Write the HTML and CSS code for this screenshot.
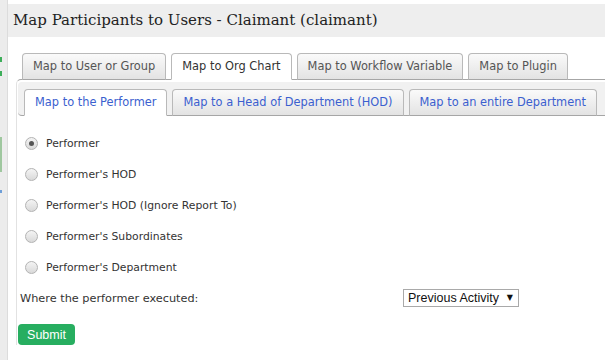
FILE: index.html
```html
<!DOCTYPE html>
<html lang="en">
<head>
  <meta charset="UTF-8">
  <meta name="viewport" content="width=device-width, initial-scale=1.0">
  <title>Map Participants to Users</title>
  <link rel="stylesheet" href="styles.css">
</head>
<body>
  <div class="page">
    <!-- pedaço da janela de trás -->
    <div class="edge">
      <span class="mark mark-1"></span>
      <span class="mark mark-2"></span>
      <span class="mark mark-3"></span>
      <span class="mark mark-4"></span>
    </div>

    <div class="dialog">
      <h1 class="title">Map Participants to Users - Claimant (claimant)</h1>

      <ul class="tabs">
        <li class="tab">Map to User or Group</li>
        <li class="tab active">Map to Org Chart</li>
        <li class="tab">Map to Workflow Variable</li>
        <li class="tab">Map to Plugin</li>
      </ul>

      <div class="panel">
        <ul class="subtabs">
          <li class="subtab active">Map to the Performer</li>
          <li class="subtab">Map to a Head of Department (HOD)</li>
          <li class="subtab">Map to an entire Department</li>
        </ul>

        <form class="form">
          <div class="options">
            <label class="option"><input type="radio" name="type" checked><span>Performer</span></label>
            <label class="option"><input type="radio" name="type"><span>Performer's HOD</span></label>
            <label class="option"><input type="radio" name="type"><span>Performer's HOD (Ignore Report To)</span></label>
            <label class="option"><input type="radio" name="type"><span>Performer's Subordinates</span></label>
            <label class="option"><input type="radio" name="type"><span>Performer's Department</span></label>
          </div>

          <div class="field">
            <label for="executed">Where the performer executed:</label>
            <span class="select-wrap">
              <select id="executed" name="executed">
                <option>Previous Activity</option>
              </select>
              <span class="caret">&#9660;</span>
            </span>
          </div>

          <button type="button" class="submit">Submit</button>
        </form>
      </div>
    </div>
  </div>
</body>
</html>
```

FILE: styles.css
```css
* {
  box-sizing: border-box;
}
body {
  margin: 0;
  background-color: #fff;
  font-family: "DejaVu Sans", Verdana, sans-serif;
  color: #333;
}
.page {
  display: flex;
  min-height: 360px;
}
.edge {
  width: 8px;
  flex-shrink: 0;
  background-color: #ececec;
  border-right: 1px solid #dcdcdc;
  display: flex;
  flex-direction: column;
}
.mark {
  display: block;
  width: 2px;
}
.mark-1 {
  margin-top: 57px;
  height: 5px;
  background-color: #3dae5a;
}
.mark-2 {
  margin-top: 9px;
  height: 5px;
  background-color: #3dae5a;
}
.mark-3 {
  margin-top: 61px;
  height: 35px;
  background-color: #9fc79f;
}
.mark-4 {
  margin-top: 18px;
  height: 3px;
  background-color: #6e9fd8;
}
.dialog {
  flex: 1;
  padding-top: 4px;
}
.title {
  margin: 0;
  height: 33px;
  padding-left: 5px;
  background-color: #eeeeee;
  font-family: "DejaVu Serif", Georgia, serif;
  font-weight: normal;
  font-size: 15px;
  line-height: 33px;
  color: #222;
}
.tabs {
  list-style: none;
  margin: 16px 0 -1px 8px;
  padding: 0 0 0 6px;
  display: flex;
  gap: 5px;
  position: relative;
  z-index: 1;
}
.tab {
  height: 27px;
  line-height: 25px;
  padding: 0 10px;
  border: 1px solid #b9b9b9;
  border-bottom-color: #a6a6a6;
  border-radius: 4px 4px 0 0;
  background: linear-gradient(#fafafa, #e3e3e3);
  font-size: 11.4px;
  color: #555;
}
.tab.active {
  background: #fff;
  border-bottom-color: #fff;
  color: #333;
}
.panel {
  margin-left: 8px;
  border-top: 1px solid #a6a6a6;
  border-left: 1px solid #e2e2e2;
  border-top-left-radius: 5px;
}
.subtabs {
  list-style: none;
  margin: 2px 0 0 1px;
  padding: 7px 0 0 6px;
  display: flex;
  gap: 5px;
  background-color: #f1f1f1;
  border-bottom: 1px solid #a6a6a6;
  border-radius: 4px 0 0 4px;
}
.subtab {
  height: 27px;
  line-height: 25px;
  margin-bottom: -1px;
  padding: 0 10px;
  border: 1px solid #b9b9b9;
  border-bottom-color: #a6a6a6;
  border-radius: 4px 4px 0 0;
  background: linear-gradient(#fafafa, #e3e3e3);
  font-size: 11.4px;
  color: #3b5fcf;
}
.subtab.active {
  background: #fff;
  border-bottom-color: #fff;
}
.form {
  padding: 12px 0 0 1px;
}
.options {
  display: flex;
  flex-direction: column;
}
.option {
  display: flex;
  align-items: center;
  height: 31px;
  padding-left: 7px;
  font-size: 10.8px;
  color: #333;
}
.option input {
  appearance: none;
  width: 13px;
  height: 13px;
  margin: 0 8px 0 0;
  border: 1px solid #b3b3b3;
  border-radius: 50%;
  background: linear-gradient(#f4f4f4, #d9d9d9);
  display: grid;
  place-items: center;
}
.option input:checked::after {
  content: "";
  width: 5px;
  height: 5px;
  border-radius: 50%;
  background-color: #555;
}
.field {
  display: grid;
  grid-template-columns: 383px auto;
  align-items: center;
  margin-top: 6px;
  padding-left: 2px;
  font-size: 11.3px;
  color: #333;
}
.select-wrap {
  position: relative;
  display: inline-block;
  width: 116px;
}
.select-wrap select {
  appearance: none;
  width: 116px;
  height: 18px;
  padding: 0 0 0 4px;
  margin: 0;
  border: 1px solid #a9a9a9;
  border-radius: 0;
  background-color: #fff;
  font-family: "Liberation Sans", Arial, sans-serif;
  font-size: 12.5px;
  color: #111;
}
.caret {
  position: absolute;
  right: 6px;
  top: 4px;
  font-size: 8px;
  color: #111;
  pointer-events: none;
}
.submit {
  display: block;
  margin: 17px 0 0 0;
  width: 57px;
  height: 21px;
  padding: 0;
  border: none;
  border-radius: 4px;
  background-color: #27ae60;
  font-family: "Liberation Sans", Arial, sans-serif;
  font-size: 12.5px;
  color: #fff;
}
```
